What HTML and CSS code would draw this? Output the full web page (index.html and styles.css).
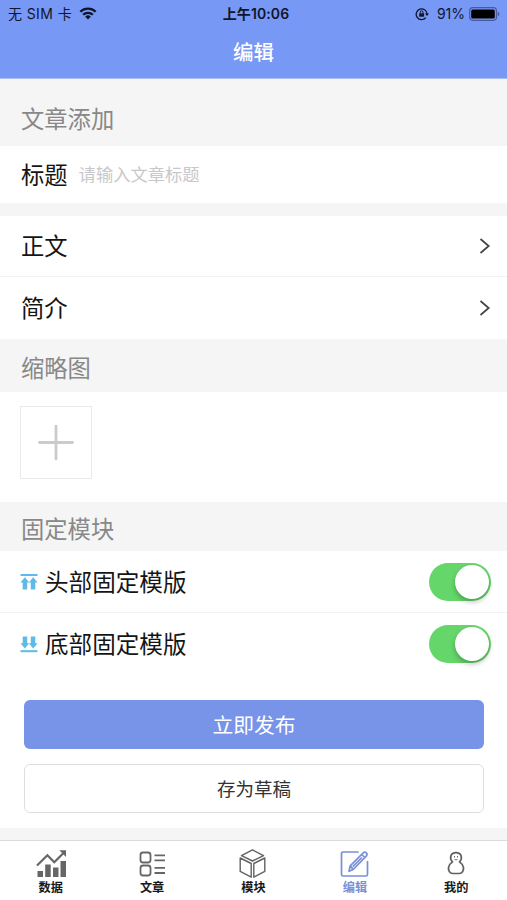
FILE: index.html
```html
<!DOCTYPE html>
<html lang="zh-CN">
<head>
<meta charset="utf-8">
<meta name="viewport" content="width=device-width, initial-scale=1">
<title>编辑</title>
<link rel="stylesheet" href="styles.css">
</head>
<body>
<div class="app">
  <header class="header">
    <div class="status">
      <div class="status-left">
        <span>无 SIM 卡</span>
        <svg width="18" height="13" viewBox="0 0 18 13" fill="none" stroke="#10152b" stroke-width="2.3"><path d="M1.3 4.7a11 11 0 0 1 15.4 0M4.1 7.8a7 7 0 0 1 9.8 0"/><path d="M6.2 9.7a4 4 0 0 1 5.6 0L9 12.6z" fill="#10152b" stroke="none"/></svg>
      </div>
      <div class="status-time">上午10:06</div>
      <div class="status-right">
        <svg class="lock" width="14" height="14" viewBox="0 0 14 14" fill="none" stroke="#10152b" stroke-width="1.3"><path d="M10.8 10.7A5.4 5.4 0 1 1 12 7"/><path d="M10 6.4h4L12 9z" fill="#10152b" stroke="none"/><path d="M4.2 6.3h4.9v3.4H4.2z" fill="#10152b" stroke="none"/><path d="M5.3 6.5V5.2a1.35 1.35 0 0 1 2.7 0v1.3" stroke-width="1"/></svg>
        <span>91%</span>
        <svg class="battery" width="31" height="14" viewBox="0 0 31 14"><rect x=".7" y=".7" width="26.8" height="12.6" rx="3.2" fill="none" stroke="#465a9d" stroke-width="1.2"/><rect x="2.2" y="2.4" width="23.6" height="9.2" rx="1.6" fill="#000"/><path d="M28.8 4.8q1.6 .5 1.6 2.2t-1.6 2.2z" fill="#465a9d"/></svg>
      </div>
    </div>
    <h1 class="title">编辑</h1>
  </header>

  <main class="content">
    <h2 class="section section-article">文章添加</h2>
    <div class="row row-title">
      <span>标题</span>
      <span class="placeholder">请输入文章标题</span>
    </div>
    <div class="row row-body">
      <span>正文</span>
      <svg class="chevron" width="12" height="18" viewBox="0 0 12 18"><path d="M1.500 2l8.200 7-8.200 7"/></svg>
    </div>
    <div class="row row-intro">
      <span>简介</span>
      <svg class="chevron" width="12" height="18" viewBox="0 0 12 18"><path d="M1.500 2l8.200 7-8.200 7"/></svg>
    </div>
    <h2 class="section section-thumb">缩略图</h2>
    <div class="thumbs">
      <div class="add"><svg width="36" height="36" viewBox="0 0 36 36"><path d="M1.500 17.500h33M18 1v33" stroke="#cbcbcb" stroke-width="2.800" stroke-linecap="round"/></svg></div>
    </div>
    <h2 class="section section-module">固定模块</h2>
    <div class="row row-switch row-line">
      <svg class="pin" width="18" height="18" viewBox="0 0 18 18"><path d="M.5 2h17" stroke="#5dbae9" stroke-width="2"/><path d="M4.900 4.300l4.300 5.200H7.200v6.900H2.700V9.500H.4zM13.200 4.300l4.400 5.200h-2.300v6.900h-4.500V9.500H8.800z"/></svg>
      <span>头部固定模版</span>
      <div class="switch"><div class="knob"></div></div>
    </div>
    <div class="row row-switch">
      <svg class="pin" width="18" height="18" viewBox="0 0 18 18"><path d="M.5 16.200h17" stroke="#5dbae9" stroke-width="2"/><path d="M4.900 13.500l4.300-5.200H7.200V1.400H2.700v6.900H.4zM13.200 13.500l4.400-5.200h-2.300V1.400h-4.500v6.900H8.800z"/></svg>
      <span>底部固定模版</span>
      <div class="switch"><div class="knob"></div></div>
    </div>
    <div class="actions">
      <div class="button primary">立即发布</div>
      <div class="button secondary">存为草稿</div>
    </div>
  </main>

  <nav class="tabs">
    <div class="tab">
      <svg width="32" height="30" viewBox="0 0 32 30"><path d="M2 16.500L12.400 6.300l6.900 7L29 3.400" fill="none" stroke="#666" stroke-width="2.200"/><path d="M24.300 1.300H31v6.800zM2.500 22h5.500v6H2.500zM10.200 15.500h5.500V28h-5.500zM18 18.500h5.500V28H18zM25.500 12h5.500v16h-5.500z" fill="#666"/></svg>
      <span>数据</span>
    </div>
    <div class="tab">
      <svg width="32" height="30" viewBox="0 0 32 30" fill="none" stroke="#666" stroke-width="1.800"><rect x="4.500" y="3.500" width="10" height="10" rx="2.500"/><rect x="4.500" y="16.500" width="10" height="10" rx="2.500"/><path d="M18.500 6.300H29M18.500 11.400H29M18.500 18.800H29M18.500 24H29"/></svg>
      <span>文章</span>
    </div>
    <div class="tab">
      <svg width="32" height="30" viewBox="0 0 32 30" fill="none" stroke="#626262" stroke-width="1.400" stroke-linejoin="round"><path d="M15.500 .9l11 5.700L15.500 12l-11-5.400zM3.200 9l11 5.500v13.700l-11-5.800zM27.800 9l-11 5.500v13.700l11-5.800z"/></svg>
      <span>模块</span>
    </div>
    <div class="tab active">
      <svg width="32" height="30" viewBox="0 0 32 30" fill="none" stroke="#7990d6" stroke-width="1.700" stroke-linejoin="round" stroke-linecap="round"><path d="M19 3H4.100Q2.500 3 2.500 4.600v20.800Q2.500 27 4.100 27h22.800q1.600 0 1.600-1.600V12.500"/><path d="M10 22.300l1.200-5.400L24.500 3.700q1.400-1.100 2.800.1t.1 3L14.200 20.500zM22.700 5.500l3 3M11.200 16.900l3 3.500M14.300 17.100L22.400 9"/></svg>
      <span>编辑</span>
    </div>
    <div class="tab">
      <svg width="32" height="30" viewBox="0 0 32 30" fill="none" stroke="#606060" stroke-width="1.700"><path d="M12.400 12.900C9 9 10.600 3.700 16 3.700s7 5.300 3.600 9.200c4.200 3 5.200 7.700 2.200 10.700q-1 .9-2.800.9h-6q-1.800 0-2.800-.9c-3-3-2-7.700 2.200-10.700z"/><path d="M14.500 7v1.500M17.500 7v1.500M14.500 10.500q1.500.9 3 0" stroke-width=".9"/></svg>
      <span>我的</span>
    </div>
  </nav>
</div>
</body>
</html>
```
FILE: styles.css
```css
* { box-sizing: border-box; }

body {
  margin: 0;
  background: #f5f5f5;
  color: #151515;
  font-family: "Noto Sans CJK SC", sans-serif;
}

.app {
  height: 900px;
  display: flex;
  flex-direction: column;
}

.header {
  height: 79px;
  background: #7898f5;
  border-bottom: 1px solid #a9bdf2;
}

.status {
  height: 27px;
  padding: 0 7px 0 8px;
  display: grid;
  grid-template-columns: 1fr auto 1fr;
  align-items: center;
  color: #10152b;
  font: 14px/27px Inter, "Noto Sans CJK SC", sans-serif;
}

.status-left, .status-right {
  display: flex;
  align-items: center;
}

.status-left { gap: 7px; letter-spacing: 0.4px; }
.status-right { justify-content: flex-end; }
.status-time { padding-left: 4px; font-weight: 600; letter-spacing: 0.1px; }
.lock { margin-right: 8px; }
.battery { margin-left: 4px; }

.title {
  margin: 0;
  color: #fff;
  font-size: 20.5px;
  font-weight: 500;
  line-height: 49px;
  text-align: center;
}

.section {
  margin: 0;
  padding-left: 21px;
  color: #888;
  font-size: 23.3px;
  font-weight: 400;
}

.section-article { height: 67px; line-height: 79px; }
.section-thumb { height: 53px; line-height: 57px; }
.section-module { height: 49px; line-height: 53px; }

.row {
  display: flex;
  align-items: center;
  padding: 0 16px 0 21px;
  background: #fff;
  font-size: 23.3px;
  line-height: 34px;
}

.row > span { padding-bottom: 2px; }

.row-title { height: 57px; margin-bottom: 13px; }
.row-body { height: 61px; border-bottom: 1px solid #f3f3f3; }
.row-intro { height: 62px; }
.row-switch { height: 62px; padding-left: 20px; font-size: 23.6px; }
.row-line { border-bottom: 1px solid #f3f3f3; }

.placeholder {
  margin-left: 11px;
  color: #c8c8cc;
  font-size: 17.3px;
}

.chevron {
  margin-left: auto;
  fill: none;
  stroke: #444;
  stroke-width: 1.7;
}

.pin {
  margin-right: 7px;
  fill: #5dbae9;
}

.switch {
  width: 62px;
  height: 38px;
  margin-left: auto;
  padding: 2px;
  border-radius: 19px;
  background: #65d669;
  display: flex;
  justify-content: flex-end;
}

.knob {
  width: 34px;
  height: 34px;
  border-radius: 50%;
  background: #fff;
  box-shadow: 0 3px 5px rgba(0, 0, 0, 0.25);
}

.thumbs {
  height: 110px;
  padding: 14px 20px;
  background: #fff;
}

.add {
  width: 72px;
  height: 73px;
  border: 1.5px solid #e9e9e9;
  display: grid;
  place-items: center;
}

.actions {
  height: 153px;
  padding: 25px 23px 0 24px;
  display: flex;
  flex-direction: column;
  gap: 15px;
  background: #fff;
}

.button {
  height: 49px;
  border-radius: 6px;
  text-align: center;
}

.primary {
  background: #7894e9;
  color: #fff;
  font-size: 20.8px;
  line-height: 49px;
}

.secondary {
  border: 1.5px solid #dedede;
  color: #333;
  font-size: 18.5px;
  line-height: 46px;
}

.tabs {
  height: 60px;
  margin-top: auto;
  border-top: 1px solid #dcdcdc;
  background: #fff;
  display: grid;
  grid-template-columns: repeat(5, 1fr);
}

.tab {
  display: flex;
  flex-direction: column;
  align-items: center;
  padding-top: 8px;
  color: #181818;
  font-size: 12.2px;
  font-weight: 700;
  line-height: 17px;
}

.active { color: #7990d6; }
```
